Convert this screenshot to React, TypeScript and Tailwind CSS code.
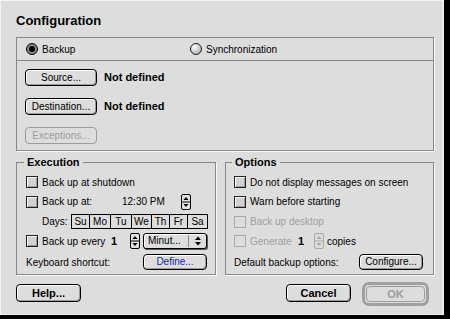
import React from "react";

const F = "font-['Liberation_Sans',Arial,sans-serif]";

function Check({ disabled = false }: { disabled?: boolean }) {
  return disabled ? (
    <span className="block w-[12px] h-[12px] shrink-0 border border-[#a8a8a8] bg-[#dddddd]" />
  ) : (
    <span className="block w-[12px] h-[12px] shrink-0 border border-[#222] bg-[#d2d2d2] shadow-[inset_1px_1px_0_#f8f8f8,inset_-1px_-1px_0_#9a9a9a]" />
  );
}

function Spinner({ disabled = false }: { disabled?: boolean }) {
  const c = disabled ? "#a8a8a8" : "#000";
  return (
    <svg width="10" height="16" viewBox="0 0 10 16" className="block shrink-0">
      <rect x="0.5" y="0.5" width="9" height="15" rx="1.5" fill={disabled ? "#dddddd" : "#e2e2e2"} stroke={c} />
      <line x1="0" y1="8" x2="10" y2="8" stroke={c} />
      <path d="M5 3 L7.5 6 H2.5Z" fill={c} />
      <path d="M5 13 L7.5 10 H2.5Z" fill={c} />
    </svg>
  );
}

function Btn({
  children,
  className = "",
  disabled = false,
}: {
  children: React.ReactNode;
  className?: string;
  disabled?: boolean;
}) {
  return (
    <div
      className={`flex items-center justify-center shrink-0 rounded-[4px] border bg-[#dddddd] leading-none ${
        disabled
          ? "border-[#9c9c9c] text-[#9c9c9c]"
          : "border-black shadow-[inset_1px_1px_0_#fff,inset_-1px_-1px_0_#9a9a9a]"
      } ${className}`}
    >
      {children}
    </div>
  );
}

function Legend({ children, left }: { children: React.ReactNode; left: string }) {
  return (
    <span
      className={`absolute top-[-8px] ${left} bg-[#dddddd] px-[3px] text-[11px] font-bold leading-[14px]`}
    >
      {children}
    </span>
  );
}

const days = [
  ["Su", "w-[18px]"],
  ["Mo", "w-[21px]"],
  ["Tu", "w-[21px]"],
  ["We", "w-[20px]"],
  ["Th", "w-[18px]"],
  ["Fr", "w-[18px]"],
  ["Sa", "w-[20px]"],
];

export default function App() {
  return (
    <div className={`w-[450px] h-[319px] bg-black overflow-hidden ${F} text-[10px] text-black`}>
      <div className="w-[444px] h-[315px] bg-[#dddddd] pl-[16px] pt-[13px] shadow-[inset_1px_1px_0_#f4f4f4,inset_-2px_-1px_0_#eeeeee]">
        <div className="text-[13px] font-bold leading-[16px] h-[16px]">Configuration</div>

        {/* Top group */}
        <div className="mt-[8px] w-[418px] h-[114px] border border-[#888] shadow-[1px_1px_0_#fafafa]">
          <div className="h-[23px] border-b border-[#888] flex items-center pl-[9px]">
            <div className="w-[164px] flex items-center gap-[4px]">
              <span className="flex items-center justify-center w-[12px] h-[12px] rounded-full border border-black bg-[#8a8a8a]">
                <span className="block w-[6px] h-[6px] rounded-full bg-black" />
              </span>
              <span>Backup</span>
            </div>
            <div className="flex items-center gap-[4px]">
              <span className="block w-[12px] h-[12px] rounded-full border border-[#222] bg-[radial-gradient(circle_at_35%_30%,#ffffff,#c4c4c4_60%,#8c8c8c)]" />
              <span>Synchronization</span>
            </div>
          </div>
          <div className="pl-[8px] pt-[8px] flex flex-col gap-[12px]">
            <div className="flex items-center gap-[7px]">
              <Btn className="w-[72px] h-[17px]">Source...</Btn>
              <span className="text-[11px] font-bold">Not defined</span>
            </div>
            <div className="flex items-center gap-[7px]">
              <Btn className="w-[72px] h-[17px]">Destination...</Btn>
              <span className="text-[11px] font-bold">Not defined</span>
            </div>
            <div className="flex items-center">
              <Btn className="w-[72px] h-[17px]" disabled>
                Exceptions...
              </Btn>
            </div>
          </div>
        </div>

        {/* Bottom groups */}
        <div className="mt-[11px] flex gap-[9px]">
          {/* Execution */}
          <div className="relative w-[200px] h-[113px] border border-[#888] shadow-[1px_1px_0_#fafafa] pt-[9px] pl-[9px]">
            <Legend left="left-[7px]">Execution</Legend>
            <div className="h-[20px] flex items-center gap-[4px]">
              <Check />
              <span>Back up at shutdown</span>
            </div>
            <div className="h-[19px] flex items-center">
              <Check />
              <span className="ml-[4px] w-[80px]">Back up at:</span>
              <span className="w-[59px]">12:30 PM</span>
              <Spinner />
            </div>
            <div className="h-[21px] flex items-center">
              <span className="ml-[16px] w-[29px]">Days:</span>
              <div className="flex h-[15px] border-l border-black">
                {days.map(([d, w]) => (
                  <span
                    key={d}
                    className={`${w} h-full flex items-center justify-center border-y border-r border-black leading-none`}
                  >
                    {d}
                  </span>
                ))}
              </div>
            </div>
            <div className="h-[18px] flex items-center">
              <Check />
              <span className="ml-[4px] w-[69px]">Back up every</span>
              <span className="w-[19px] text-[11px] font-bold">1</span>
              <Spinner />
              <div className="ml-[3px] w-[64px] h-[16px] flex items-center rounded-[3px] border border-black bg-[#dddddd] shadow-[inset_1px_1px_0_#fff,1px_1px_0_#555]">
                <span className="pl-[4px] w-[44px] leading-none">Minut...</span>
                <span className="h-[12px] border-l border-[#888]" />
                <svg width="8" height="10" viewBox="0 0 8 10" className="ml-[5px]">
                  <path d="M4 0.5 L7 4 H1Z" fill="#000" />
                  <path d="M4 9.5 L7 6 H1Z" fill="#000" />
                </svg>
              </div>
            </div>
            <div className="h-[24px] flex items-center -ml-[9px] pl-[9px]">
              <span className="w-[117px]">Keyboard shortcut:</span>
              <Btn className="w-[64px] h-[16px] text-[#1c1cb8]">Define...</Btn>
            </div>
          </div>

          {/* Options */}
          <div className="relative w-[209px] h-[113px] border border-[#888] shadow-[1px_1px_0_#fafafa] pt-[9px] pl-[8px]">
            <Legend left="left-[6px]">Options</Legend>
            <div className="h-[20px] flex items-center gap-[4px]">
              <Check />
              <span>Do not display messages on screen</span>
            </div>
            <div className="h-[19px] flex items-center gap-[4px]">
              <Check />
              <span>Warn before starting</span>
            </div>
            <div className="h-[21px] flex items-center gap-[4px] text-[#a0a0a0]">
              <Check disabled />
              <span>Back up desktop</span>
            </div>
            <div className="h-[18px] flex items-center text-[#a0a0a0]">
              <Check disabled />
              <span className="ml-[4px] w-[48px]">Generate</span>
              <span className="w-[16px] text-[11px] font-bold text-black">1</span>
              <Spinner disabled />
              <span className="ml-[3px] text-black">copies</span>
            </div>
            <div className="h-[24px] flex items-center">
              <span className="w-[125px]">Default backup options:</span>
              <Btn className="w-[64px] h-[16px]">Configure...</Btn>
            </div>
          </div>
        </div>

        {/* Bottom buttons */}
        <div className="mt-[7px] w-[413px] h-[24px] flex items-start">
          <Btn className="mt-[2px] w-[65px] h-[18px] text-[11px] font-bold">Help...</Btn>
          <Btn className="ml-auto mt-[2px] w-[65px] h-[18px] text-[11px] font-bold">Cancel</Btn>
          <div className="ml-[11px] w-[67px] h-[24px] rounded-[7px] border-[3px] border-[#a0a0a0] p-[1px] flex">
            <Btn className="w-full h-full text-[11px] font-bold" disabled>
              OK
            </Btn>
          </div>
        </div>
      </div>
    </div>
  );
}
